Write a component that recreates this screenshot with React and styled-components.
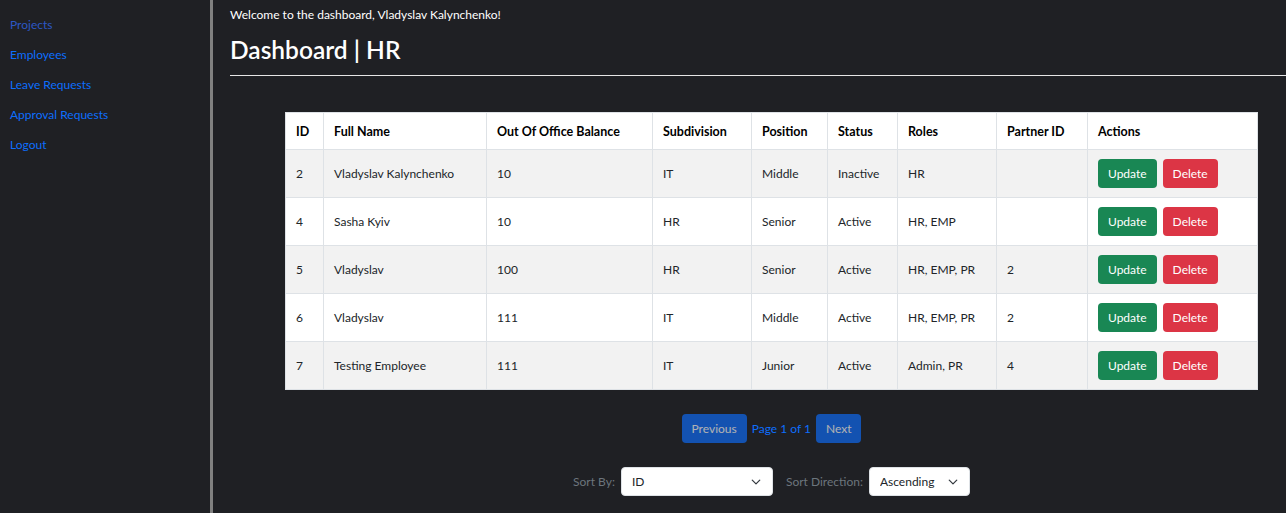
import styled, { createGlobalStyle } from "styled-components"

const GlobalStyle = createGlobalStyle`
html, body {
    margin: 0;
    padding: 0;
    background: #1f2024;
    font-family: Lato, "Noto Sans", sans-serif;
    font-size: 12px;
}
* { box-sizing: border-box; }
`

const employees = [
    { id: 2, name: "Vladyslav Kalynchenko", balance: 10, sub: "IT", pos: "Middle", status: "Inactive", roles: "HR", partner: "" },
    { id: 4, name: "Sasha Kyiv", balance: 10, sub: "HR", pos: "Senior", status: "Active", roles: "HR, EMP", partner: "" },
    { id: 5, name: "Vladyslav", balance: 100, sub: "HR", pos: "Senior", status: "Active", roles: "HR, EMP, PR", partner: 2 },
    { id: 6, name: "Vladyslav", balance: 111, sub: "IT", pos: "Middle", status: "Active", roles: "HR, EMP, PR", partner: 2 },
    { id: 7, name: "Testing Employee", balance: 111, sub: "IT", pos: "Junior", status: "Active", roles: "Admin, PR", partner: 4 },
]

const columns = [
    ["ID", 38], ["Full Name", 163], ["Out Of Office Balance", 166], ["Subdivision", 99],
    ["Position", 76], ["Status", 70], ["Roles", 99], ["Partner ID", 91], ["Actions", 170],
]

const Chevron = () => (
    <svg width="10" height="10" viewBox="0 0 16 16" fill="none" stroke="#343a40" strokeWidth="2" strokeLinecap="round" strokeLinejoin="round">
        <path d="M2 5l6 6 6-6" />
    </svg>
)

const App = () => {
    return (
        <Layout>
            <GlobalStyle />
            <Sidebar>
                <NavLink href="#" $visited>Projects</NavLink>
                <NavLink href="#">Employees</NavLink>
                <NavLink href="#">Leave Requests</NavLink>
                <NavLink href="#">Approval Requests</NavLink>
                <NavLink href="#">Logout</NavLink>
            </Sidebar>
            <Main>
                <Welcome>Welcome to the dashboard, Vladyslav Kalynchenko!</Welcome>
                <Title>Dashboard | HR</Title>
                <Rule />
                <Content>
                    <Table>
                        <colgroup>
                            {columns.map(([name, w]) => <col key={name} style={{ width: w }} />)}
                        </colgroup>
                        <thead>
                            <tr>
                                {columns.map(([name]) => <Th key={name}>{name}</Th>)}
                            </tr>
                        </thead>
                        <tbody>
                            {employees.map((e, i) => (
                                <Row key={e.id} $striped={i % 2 === 0}>
                                    <Td>{e.id}</Td>
                                    <Td>{e.name}</Td>
                                    <Td>{e.balance}</Td>
                                    <Td>{e.sub}</Td>
                                    <Td>{e.pos}</Td>
                                    <Td>{e.status}</Td>
                                    <Td>{e.roles}</Td>
                                    <Td>{e.partner}</Td>
                                    <Td>
                                        <Actions>
                                            <ActionButton $color="#198754">Update</ActionButton>
                                            <ActionButton $color="#dc3545">Delete</ActionButton>
                                        </Actions>
                                    </Td>
                                </Row>
                            ))}
                        </tbody>
                    </Table>
                    <Pagination>
                        <PageButton disabled>Previous</PageButton>
                        <PageInfo>Page 1 of 1</PageInfo>
                        <PageButton disabled>Next</PageButton>
                    </Pagination>
                    <SortRow>
                        <SortLabel>Sort By:</SortLabel>
                        <SelectBox $width={152}>
                            <Select defaultValue="id">
                                <option value="id">ID</option>
                                <option value="name">Full Name</option>
                            </Select>
                            <ChevronSpot><Chevron /></ChevronSpot>
                        </SelectBox>
                        <SortLabel>Sort Direction:</SortLabel>
                        <SelectBox $width={101}>
                            <Select defaultValue="asc">
                                <option value="asc">Ascending</option>
                                <option value="desc">Descending</option>
                            </Select>
                            <ChevronSpot><Chevron /></ChevronSpot>
                        </SelectBox>
                    </SortRow>
                </Content>
            </Main>
        </Layout>
    )
}

export default App

const Layout = styled.div`
display: flex;
min-height: 100vh;
background: #1f2024;
`
const Sidebar = styled.nav`
width: 213px;
flex-shrink: 0;
border-right: 3px solid #808080;
padding: 10px 0 0 10px;
display: flex;
flex-direction: column;
`
const NavLink = styled.a`
color: ${p => p.$visited ? "#2c57c4" : "#0d6efd"};
text-decoration: none;
line-height: 30px;
font-size: 12px;
`
const Main = styled.main`
flex: 1;
padding: 6px 0 0 17px;
color: #fff;
`
const Welcome = styled.p`
margin: 0;
line-height: 18px;
font-size: 12px;
`
const Title = styled.h1`
margin: 11px 0 0 0;
font-size: 24.5px;
line-height: 30px;
font-weight: 600;
`
const Rule = styled.hr`
margin: 10px 0 0 0;
border: none;
border-top: 1px solid #e6e6e6;
`
const Content = styled.div`
margin: 36px 29px 0 55px;
display: flex;
flex-direction: column;
align-items: center;
`
const Table = styled.table`
width: 100%;
table-layout: fixed;
border-collapse: collapse;
background: #fff;
color: #212529;
`
const Th = styled.th`
text-align: left;
font-weight: 700;
font-size: 12.5px;
height: 37px;
padding: 0 10px;
border: 1px solid #dee2e6;
color: #000;
white-space: nowrap;
`
const Row = styled.tr`
background: ${p => p.$striped ? "#f2f2f2" : "#fff"};
`
const Td = styled.td`
height: 48px;
padding: 0 10px;
border: 1px solid #dee2e6;
white-space: nowrap;
`
const Actions = styled.div`
display: flex;
gap: 6px;
`
const ActionButton = styled.button`
background: ${p => p.$color};
color: #fff;
border: none;
border-radius: 4px;
height: 29px;
padding: 0 10px;
font-family: inherit;
font-size: 12px;
`
const Pagination = styled.div`
margin-top: 24px;
display: flex;
align-items: center;
gap: 5px;
`
const PageButton = styled.button`
background: #0d6efd;
color: #fff;
border: none;
border-radius: 4px;
height: 29px;
padding: 0 10px;
font-family: inherit;
font-size: 12px;
&:disabled { opacity: .65; }
`
const PageInfo = styled.span`
color: #0d6efd;
font-size: 12px;
`
const SortRow = styled.div`
margin-top: 24px;
display: flex;
align-items: center;
`
const SortLabel = styled.span`
color: #6c757d;
font-size: 12px;
margin: 0 6px 0 13px;
&:first-child { margin-left: 0; }
`
const SelectBox = styled.div`
position: relative;
width: ${p => p.$width}px;
`
const Select = styled.select`
appearance: none;
width: 100%;
height: 29px;
border: 1px solid #dee2e6;
border-radius: 4px;
background: #fff;
padding: 0 26px 0 10px;
font-family: inherit;
font-size: 12px;
color: #212529;
`
const ChevronSpot = styled.span`
position: absolute;
right: 12px;
top: 10px;
display: flex;
pointer-events: none;
`
